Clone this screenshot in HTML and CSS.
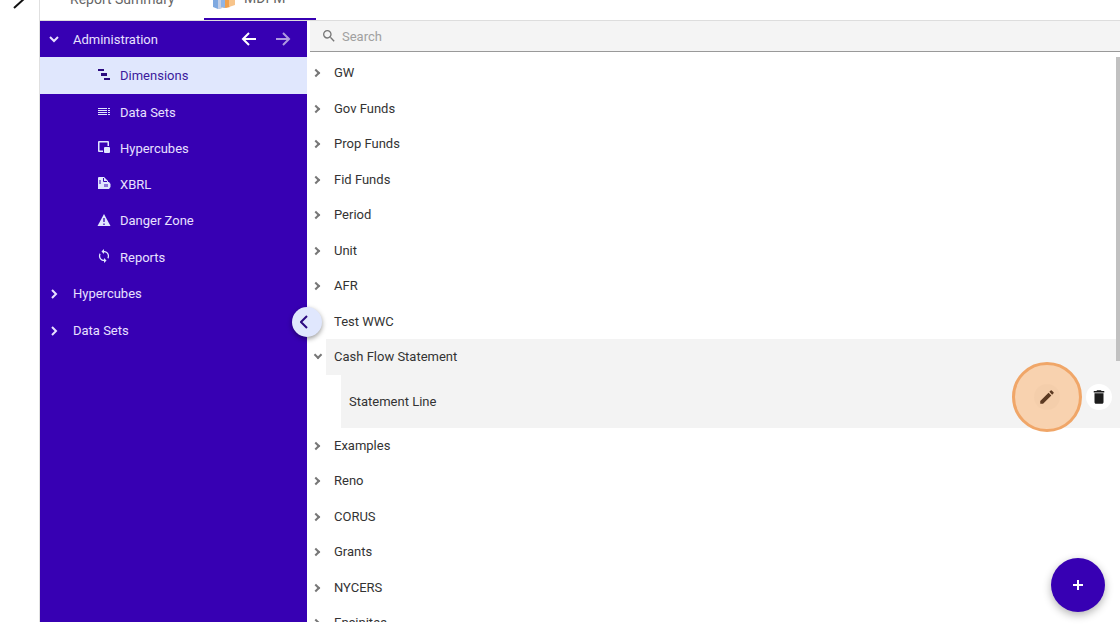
FILE: index.html
```html
<!DOCTYPE html>
<html lang="en">
<head>
    <meta charset="UTF-8">
    <meta name="viewport" content="width=device-width, initial-scale=1.0">
    <title>MDFM - Dimensions</title>
    <link rel="stylesheet" href="styles.css">
</head>
<body>
    <div class="app">
      <aside class="rail">
        <button class="railBtn" aria-label="Expand">
          <svg width="14" height="20" viewBox="0 0 14 20"><path d="M1 18L12 8L1 -2" fill="none" stroke="#111" stroke-width="2"/></svg>
        </button>
      </aside>

      <div class="main">
        <nav class="tabs">
          <a href="#" class="tab">Report Summary</a>
          <a href="#" class="tab active">
            <svg width="24" height="24" viewBox="0 0 24 24">
              <path d="M1 10l5-3 4 2v13l-4 1-5-2z" fill="#7fa9e0"/>
              <path d="M6 11l4-2v13l-4 1z" fill="#c3cfe6"/>
              <path d="M9 4l5-3 4 2v18l-4 1-5-1z" fill="#f0a04c"/>
              <path d="M9 6l4 1v15l-4-1z" fill="#8fb4e6"/>
              <path d="M17 8l3-2 3 2v11l-6 2z" fill="#f7c48b"/>
            </svg>
            <span>MDFM</span>
          </a>
        </nav>

        <div class="body">
          <div class="side">
            <div class="sideHead">
              <svg class="chev" viewBox="0 0 12 12"><path d="M2 4l4 4 4-4"/></svg>
              <span>Administration</span>
              <button class="navBtn" aria-label="Back"><svg viewBox="0 0 16 16"><path d="M15 8H2M8 2L2 8l6 6"/></svg></button>
              <button class="navBtn off" aria-label="Forward"><svg viewBox="0 0 16 16"><path d="M1 8h13M8 2l6 6-6 6"/></svg></button>
            </div>
            <ul class="sideList">
              <li><a href="#" class="active">
                <svg viewBox="0 0 14 14"><path d="M1 1h6v2H1zM4 5h6v3H4zM7 10h6v2H7z"/></svg>Dimensions</a></li>
              <li><a href="#">
                <svg viewBox="0 0 14 14"><path d="M1 4h9v1H1zM1 6h9v1H1zM1 8h9v1H1zM1 10h9v1H1zM11 4h2v1h-2zM11 6h2v1h-2zM11 8h2v1h-2zM11 10h2v1h-2z"/></svg>Data Sets</a></li>
              <li><a href="#">
                <svg viewBox="0 0 14 14"><path d="M2 1h9a1 1 0 0 1 1 1v4h-1.500V2.500h-8v8H6V12H2a1 1 0 0 1-1-1V2a1 1 0 0 1 1-1z"/><rect x="7" y="7" width="6" height="6" rx="1"/></svg>Hypercubes</a></li>
              <li><a href="#">
                <svg viewBox="0 0 14 14"><path d="M2 1h5l4 4v1h1l1.500 2v3L12 13H1V2a1 1 0 0 1 1-1z"/><path d="M6.500 2v3.500H10M3 4v4M8 8v3M10 8v3" fill="none" stroke="#3700b3"/></svg>XBRL</a></li>
              <li><a href="#">
                <svg viewBox="0 0 14 14"><path d="M7 1l6.500 12H.5z"/><path d="M7 5v4M7 10.500V12" stroke="#3700b3" stroke-width="1.300"/></svg>Danger Zone</a></li>
              <li><a href="#">
                <svg viewBox="1 1 22 22"><path d="M12 4V1L8 5l4 4V6c3.310 0 6 2.690 6 6 0 1.010-.25 1.970-.7 2.800l1.460 1.460A7.930 7.930 0 0 0 20 12c0-4.420-3.580-8-8-8zm0 14c-3.310 0-6-2.690-6-6 0-1.010.25-1.970.7-2.800L5.240 7.740A7.930 7.930 0 0 0 4 12c0 4.420 3.580 8 8 8v3l4-4-4-4v3z"/></svg>Reports</a></li>
            </ul>
            <a href="#" class="sideGroup"><svg class="chev" viewBox="0 0 12 12"><path d="M4 2l4 4-4 4"/></svg>Hypercubes</a>
            <a href="#" class="sideGroup"><svg class="chev" viewBox="0 0 12 12"><path d="M4 2l4 4-4 4"/></svg>Data Sets</a>
            <button class="collapse" aria-label="Collapse menu"><svg viewBox="0 0 14 14"><path d="M7 1L1 7l6 6"/></svg></button>
          </div>

          <div class="content">
            <label class="search">
              <svg viewBox="0 0 24 24"><path d="M15.500 14h-.79l-.28-.27A6.470 6.470 0 0 0 16 9.500 6.500 6.500 0 1 0 9.500 16c1.610 0 3.090-.59 4.230-1.570l.27.28v.79l5 4.990L20.490 19l-4.990-5zm-6 0C7.010 14 5 11.990 5 9.500S7.010 5 9.500 5 14 7.010 14 9.500 11.990 14 9.500 14z"/></svg>
              <input type="text" placeholder="Search" aria-label="Search">
            </label>

            <div class="treeWrap">
              <ul class="tree">
                <li><button aria-label="Toggle"></button><span>GW</span></li>
                <li><button aria-label="Toggle"></button><span>Gov Funds</span></li>
                <li><button aria-label="Toggle"></button><span>Prop Funds</span></li>
                <li><button aria-label="Toggle"></button><span>Fid Funds</span></li>
                <li><button aria-label="Toggle"></button><span>Period</span></li>
                <li><button aria-label="Toggle"></button><span>Unit</span></li>
                <li><button aria-label="Toggle"></button><span>AFR</span></li>
                <li class="leaf"><span>Test WWC</span></li>
                <li class="open"><button aria-label="Toggle"></button><span>Cash Flow Statement</span>
                  <ul>
                    <li>
                      <span>Statement Line</span>
                      <button class="edit" aria-label="Edit"><svg viewBox="0 0 24 24"><path d="M3 17.250V21h3.750L17.810 9.940l-3.750-3.750L3 17.250zM20.710 7.040a1 1 0 0 0 0-1.410l-2.340-2.340a1 1 0 0 0-1.410 0l-1.830 1.830 3.750 3.750 1.830-1.830z"/></svg></button>
                      <button class="remove" aria-label="Delete"><svg viewBox="0 0 24 24"><path d="M6 19c0 1.100.9 2 2 2h8c1.100 0 2-.9 2-2V7H6v12zM19 4h-3.500l-1-1h-5l-1 1H5v2h14V4z"/></svg></button>
                    </li>
                  </ul>
                </li>
                <li><button aria-label="Toggle"></button><span>Examples</span></li>
                <li><button aria-label="Toggle"></button><span>Reno</span></li>
                <li><button aria-label="Toggle"></button><span>CORUS</span></li>
                <li><button aria-label="Toggle"></button><span>Grants</span></li>
                <li><button aria-label="Toggle"></button><span>NYCERS</span></li>
                <li><button aria-label="Toggle"></button><span>Encinitas</span></li>
              </ul>
              <div class="thumb"></div>
            </div>
          </div>
        </div>
      </div>
    </div>

    <button class="fab" aria-label="Add"><svg viewBox="0 0 12 12"><path d="M6 1v10M1 6h10"/></svg></button>
</body>
</html>
```

FILE: styles.css
```css
* {
  box-sizing: border-box;
}

body {
  margin: 0;
  background-color: #fff;
  color: #333;
  font-family: Roboto, "Liberation Sans", sans-serif;
  font-size: 13px;
  overflow: hidden;
}

ul {
  margin: 0;
  padding: 0;
  list-style: none;
}

a {
  color: inherit;
  text-decoration: none;
}

button {
  padding: 0;
  border: 0;
  background: none;
  font: inherit;
  cursor: pointer;
}

svg {
  display: block;
  flex: none;
}

.app {
  display: flex;
  height: 100vh;
  padding-bottom: 5px;
}

.rail {
  width: 39px;
  flex: none;
  overflow: hidden;
}

.railBtn {
  display: block;
  margin: -10px 0 0 13px;
}

.main {
  display: flex;
  flex-direction: column;
  flex: 1;
  min-width: 0;
  border-left: 1px solid #e0e0e0;
}

/* 상단 탭 */
.tabs {
  display: flex;
  align-items: flex-end;
  flex: none;
  height: 21px;
  border-bottom: 1px solid #ddd;
  overflow: hidden;
}

.tab {
  display: flex;
  align-items: center;
  gap: 8px;
  flex: none;
  height: 42px;
  width: 164px;
  padding-left: 30px;
  color: #666;
  font-size: 14px;
}

.tab.active {
  width: 112px;
  padding-left: 8px;
  border-bottom: 2px solid #3700b3;
}

.body {
  display: flex;
  flex: 1;
  min-height: 0;
}

/* 왼쪽 메뉴 */
.side {
  position: relative;
  flex: none;
  width: 267px;
  background-color: #3700b3;
  color: #e8e0ff;
}

.sideHead {
  display: flex;
  align-items: center;
  height: 36px;
  padding: 0 16px 0 8px;
}

.sideHead span {
  flex: 1;
}

.chev {
  width: 12px;
  height: 12px;
  margin-right: 13px;
  fill: none;
  stroke: #e8e0ff;
  stroke-width: 2;
}

.navBtn {
  margin-left: 18px;
}

.navBtn svg {
  width: 16px;
  height: 16px;
  fill: none;
  stroke: #fff;
  stroke-width: 2;
}

.navBtn.off {
  opacity: .6;
}

.sideList a {
  display: flex;
  align-items: center;
  gap: 9px;
  height: 36px;
  padding-left: 57px;
}

.sideList li:nth-child(4n+1) a {
  height: 37px;
}

.sideList svg {
  width: 14px;
  height: 14px;
  margin-bottom: 2px;
  fill: #e0e6ff;
}

.sideList a.active {
  background-color: #e0e7fd;
  color: #3c1a9c;
}

.sideList a.active svg {
  fill: #2b0a80;
}

.sideGroup {
  display: flex;
  align-items: center;
  height: 37px;
  padding-left: 8px;
}

.collapse {
  position: absolute;
  top: 286px;
  right: -15px;
  z-index: 10;
  display: grid;
  place-items: center;
  width: 30px;
  height: 30px;
  border-radius: 50%;
  background-color: #e0e7fd;
  box-shadow: 0 2px 5px rgba(0,0,0,.4);
}

.collapse svg {
  width: 14px;
  height: 14px;
  fill: none;
  stroke: #2b0a80;
  stroke-width: 2;
}

/* 오른쪽 트리 */
.content {
  display: flex;
  flex-direction: column;
  flex: 1;
  min-width: 0;
  padding-left: 3px;
}

.search {
  display: flex;
  align-items: center;
  gap: 5px;
  flex: none;
  height: 31px;
  padding-left: 11px;
  border-bottom: 1px solid #999;
  background-color: #f4f4f4;
}

.search svg {
  width: 16px;
  height: 16px;
  fill: #777;
}

.search input {
  flex: 1;
  padding: 0;
  border: 0;
  outline: 0;
  background: none;
  color: #333;
  font: inherit;
}

.search input::placeholder {
  color: #a0a0a0;
}

.treeWrap {
  position: relative;
  flex: 1;
  min-height: 0;
  padding-top: 3px;
  overflow: hidden;
}

.tree > li {
  display: flex;
  flex-wrap: wrap;
  line-height: 35px;
}

.tree > li:nth-child(odd) {
  line-height: 36px;
}

.tree > li > button {
  display: grid;
  place-items: center;
  width: 16px;
  padding-right: 4px;
}

.tree > li > button::before {
  content: "";
  width: 4px;
  height: 4px;
  border: solid #777;
  border-width: 2px 2px 0 0;
  transform: rotate(45deg);
}

.tree > li.open > button {
  padding: 0 0 4px;
}

.tree > li.open > button::before {
  transform: rotate(135deg);
}

.tree > li > span {
  flex: 1;
  padding-left: 8px;
}

.tree > .leaf {
  padding-left: 16px;
}

.tree > .open > span {
  background-color: #f3f3f3;
}

.tree ul {
  width: 100%;
  padding-left: 31px;
}

.tree ul li {
  display: flex;
  align-items: center;
  height: 53px;
  padding: 0 8px;
  background-color: #f3f3f3;
}

.tree ul span {
  flex: 1;
}

.tree ul button {
  position: relative;
  display: grid;
  place-items: center;
  width: 26px;
  height: 26px;
  margin-bottom: 10px;
  border-radius: 50%;
  background-color: #fff;
}

.tree ul .edit {
  margin-right: 26px;
  background-color: #e8e8e8;
}

/* 편집 버튼 강조 */
.edit::after {
  content: "";
  position: absolute;
  inset: -22px;
  border: 3px solid #f0a668;
  border-radius: 50%;
  background-color: rgba(250,195,145,.7);
}

.tree ul svg {
  width: 18px;
  height: 18px;
  fill: #1c1c1c;
}

.tree ul .edit svg {
  position: relative;
  z-index: 1;
  fill: #5c3a22;
}

.thumb {
  position: absolute;
  top: 5px;
  right: 0;
  width: 4px;
  height: 304px;
  background-color: #c1c1c1;
}

.fab {
  position: fixed;
  right: 15px;
  bottom: 15px;
  display: grid;
  place-items: center;
  width: 54px;
  height: 54px;
  border-radius: 50%;
  background-color: #3700b3;
  box-shadow: 0 3px 8px rgba(0,0,0,.3);
}

.fab svg {
  width: 12px;
  height: 12px;
  fill: none;
  stroke: #fff;
  stroke-width: 2;
}
```
